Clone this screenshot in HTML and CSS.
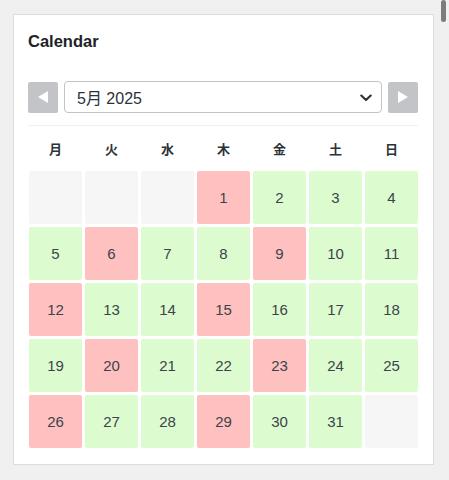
FILE: index.html
```html
<!DOCTYPE html>
<html lang="ja">
<head>
<meta charset="utf-8">
<title>Calendar</title>
<link rel="stylesheet" href="styles.css">
</head>
<body>
<div class="scroll-thumb"></div>
<div class="card">
  <h2 class="title">Calendar</h2>
  <div class="nav">
    <button class="nav-btn" aria-label="前の月">
      <svg width="12" height="14" viewBox="0 0 12 14"><path d="M11 1 L1 7 L11 13 Z" fill="#fff"/></svg>
    </button>
    <div class="select">
      <span class="select-text">5月 2025</span>
      <svg class="chev" width="12" height="8" viewBox="0 0 12 8"><path d="M1.3 1.5 L6 6 L10.7 1.5" fill="none" stroke="#2c3338" stroke-width="2.1" stroke-linecap="round" stroke-linejoin="round"/></svg>
    </div>
    <button class="nav-btn" aria-label="次の月">
      <svg width="12" height="14" viewBox="0 0 12 14"><path d="M1 1 L11 7 L1 13 Z" fill="#fff"/></svg>
    </button>
  </div>
  <div class="divider"></div>
  <div class="weekdays">
    <span>月</span><span>火</span><span>水</span><span>木</span><span>金</span><span>土</span><span>日</span>
  </div>
  <div class="grid">
    <div class="day empty"></div>
    <div class="day empty"></div>
    <div class="day empty"></div>
    <div class="day busy">1</div>
    <div class="day free">2</div>
    <div class="day free">3</div>
    <div class="day free">4</div>
    <div class="day free">5</div>
    <div class="day busy">6</div>
    <div class="day free">7</div>
    <div class="day free">8</div>
    <div class="day busy">9</div>
    <div class="day free">10</div>
    <div class="day free">11</div>
    <div class="day busy">12</div>
    <div class="day free">13</div>
    <div class="day free">14</div>
    <div class="day busy">15</div>
    <div class="day free">16</div>
    <div class="day free">17</div>
    <div class="day free">18</div>
    <div class="day free">19</div>
    <div class="day busy">20</div>
    <div class="day free">21</div>
    <div class="day free">22</div>
    <div class="day busy">23</div>
    <div class="day free">24</div>
    <div class="day free">25</div>
    <div class="day busy">26</div>
    <div class="day free">27</div>
    <div class="day free">28</div>
    <div class="day busy">29</div>
    <div class="day free">30</div>
    <div class="day free">31</div>
    <div class="day empty"></div>
  </div>
</div>
</body>
</html>
```
FILE: styles.css
```css
html, body {
  margin: 0;
  padding: 0;
}
body {
  background: #f0f0f1;
  font-family: "Liberation Sans", "Noto Sans CJK JP", sans-serif;
  color: #3c434a;
  width: 449px;
  height: 480px;
  overflow: hidden;
  position: relative;
}
.scroll-thumb {
  position: absolute;
  left: 441px;
  top: 0;
  width: 5px;
  height: 22px;
  border-radius: 3px;
  background: #7c7c7c;
}
.card {
  box-sizing: border-box;
  margin: 14px 0 0 13px;
  width: 421px;
  height: 451px;
  background: #fff;
  border: 1px solid #dcdcde;
  padding: 0 15px 0 14px;
}
.title {
  margin: 0;
  padding-top: 16px;
  height: 20px;
  line-height: 20px;
  font-size: 16.5px;
  font-weight: 700;
  color: #1d2327;
}
.nav {
  margin-top: 30px;
  display: flex;
  align-items: center;
  gap: 6px;
  height: 32px;
}
.nav-btn {
  width: 30px;
  height: 31px;
  border: 0;
  padding: 0;
  border-radius: 2px;
  background: #c3c4c7;
  display: flex;
  align-items: center;
  justify-content: center;
  flex: none;
}
.select {
  box-sizing: border-box;
  flex: 1;
  height: 32px;
  border: 1px solid #c3c4c7;
  border-radius: 4px;
  display: flex;
  align-items: center;
  justify-content: space-between;
  padding: 0 9px 0 12px;
}
.select-text {
  font-size: 16px;
  color: #2c3338;
}
.chev {
  margin-top: 2px;
}
.divider {
  margin-top: 12px;
  height: 1px;
  background: #f0f0f1;
}
.weekdays,
.grid {
  padding-left: 1px;
}
.weekdays {
  display: grid;
  grid-template-columns: repeat(7, 53px);
  column-gap: 3px;
  height: 45px;
  align-items: center;
  font-family: "Noto Sans CJK JP", sans-serif;
  font-size: 13px;
  font-weight: 700;
  color: #2c3338;
  text-align: center;
}
.grid {
  display: grid;
  grid-template-columns: repeat(7, 53px);
  grid-auto-rows: 53px;
  gap: 3px;
}
.day {
  border-radius: 2px;
  display: flex;
  align-items: center;
  justify-content: center;
  font-size: 15px;
  color: #3c434a;
}
.empty { background: #f6f6f7; }
.busy { background: #ffc0c0; }
.free { background: #dcfcd0; }
```
